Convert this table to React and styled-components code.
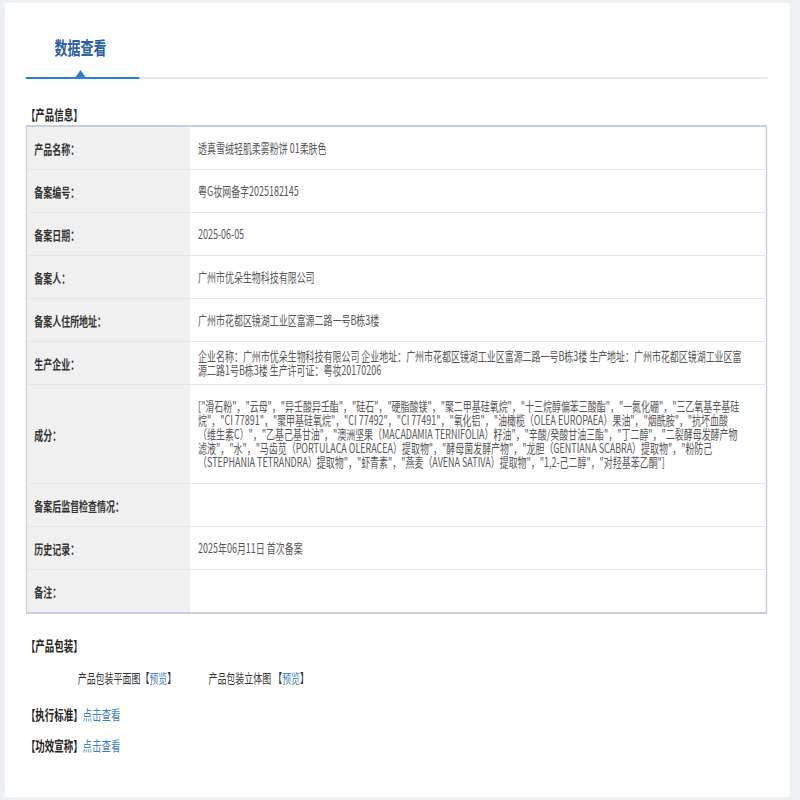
import styled, { createGlobalStyle } from "styled-components";

// the reference is squeezed horizontally, so the page is laid out wide and scaled
const SQUEEZE = 0.7;

const GlobalStyle = createGlobalStyle`
  html, body {
    margin: 0;
    padding: 0;
    overflow: hidden;
    background: #edf1f5;
  }
  body {
    font-family: "Noto Sans CJK SC", "Microsoft YaHei", sans-serif;
    color: #555;
  }
`;

const Stage = styled.div`
  width: ${800 / SQUEEZE}px;
  height: 800px;
  transform: scaleX(${SQUEEZE});
  transform-origin: 0 0;
`;

const Card = styled.div`
  box-sizing: border-box;
  margin: 3px 0 0 7px;
  width: 1121px;
  height: 794px;
  background: #fff;
  padding: 0 32px 0 30px;
`;

const TabBar = styled.div`
  display: flex;
  border-bottom: 2px solid #e3e6ea;
`;

const Tab = styled.div`
  position: relative;
  box-sizing: border-box;
  width: 162px;
  padding: 32px 6px 18px 0;
  margin-bottom: -2px;
  text-align: center;
  font-size: 18.5px;
  line-height: 24px;
  font-weight: 700;
  color: #2b5fa8;
  border-bottom: 2px solid #2a7fd2;

  &::after {
    content: "";
    position: absolute;
    left: 50%;
    bottom: 0;
    margin-left: -10px;
    border-left: 7px solid transparent;
    border-right: 7px solid transparent;
    border-bottom: 7px solid #2a7fd2;
  }
`;

const SectionTitle = styled.div`
  margin-top: ${(p) => p.$top}px;
  font-size: 13.5px;
  line-height: 18px;
  font-weight: 700;
  color: #222;
  display: flex;
  align-items: center;
`;

const Link = styled.a`
  color: #3c7fc6;
  font-weight: 400;
  font-size: ${(p) => (p.$big ? 13.5 : 12.8)}px;
  text-decoration: none;
  cursor: pointer;
`;

const Table = styled.div`
  margin-top: 2px;
  border: 2px solid #c4cedf;
`;

const Row = styled.div`
  display: grid;
  grid-template-columns: 233px 1fr;
  border-bottom: 1px solid #e5e5e5;

  &:last-child {
    border-bottom: none;
  }
`;

const Label = styled.div`
  display: flex;
  align-items: center;
  min-height: 42px;
  padding-left: 10px;
  background: #f0f0f0;
  font-size: 12.8px;
  font-weight: 700;
  color: #333;
`;

const Value = styled.div`
  display: flex;
  align-items: center;
  min-height: 42px;
  box-sizing: border-box;
  padding: ${(p) => (p.$tall ? 14 : 7)}px 33px ${(p) => (p.$tall ? 14 : 7)}px 11px;
  font-size: 12.8px;
  line-height: 14px;
  color: #555;
`;

const PackRow = styled.div`
  display: flex;
  gap: 46px;
  margin-top: 15px;
  padding-left: 74px;
  font-size: 12.8px;
  line-height: 18px;
  color: #333;
`;

const PackItem = styled.span``;

const rows = [
  ["产品名称：", "透真雪绒轻肌柔雾粉饼 01柔肤色"],
  ["备案编号：", "粤G妆网备字2025182145"],
  ["备案日期：", "2025-06-05"],
  ["备案人：", "广州市优朵生物科技有限公司"],
  ["备案人住所地址：", "广州市花都区镜湖工业区富源二路一号B栋3楼"],
  [
    "生产企业：",
    "企业名称：广州市优朵生物科技有限公司 企业地址：广州市花都区镜湖工业区富源二路一号B栋3楼 生产地址：广州市花都区镜湖工业区富源二路1号B栋3楼 生产许可证：粤妆20170206",
  ],
  [
    "成分：",
    '["滑石粉"，"云母"，"异壬酸异壬酯"，"硅石"，"硬脂酸镁"，"聚二甲基硅氧烷"，"十三烷醇偏苯三酸酯"，"一氮化硼"，"三乙氧基辛基硅烷"，"CI 77891"，"聚甲基硅氧烷"，"CI 77492"，"CI 77491"，"氧化铝"，"油橄榄（OLEA EUROPAEA）果油"，"烟酰胺"，"抗坏血酸（维生素C）"，"乙基己基甘油"，"澳洲坚果（MACADAMIA TERNIFOLIA）籽油"，"辛酸/癸酸甘油三酯"，"丁二醇"，"二裂酵母发酵产物滤液"，"水"，"马齿苋（PORTULACA OLERACEA）提取物"，"酵母菌发酵产物"，"龙胆（GENTIANA SCABRA）提取物"，"粉防己（STEPHANIA TETRANDRA）提取物"，"虾青素"，"燕麦（AVENA SATIVA）提取物"，"1,2-己二醇"，"对羟基苯乙酮"]',
    true,
  ],
  ["备案后监督检查情况：", ""],
  ["历史记录：", "2025年06月11日 首次备案"],
  ["备注：", ""],
];

export default function App() {
  return (
    <>
      <GlobalStyle />
      <Stage>
        <Card>
          <TabBar>
            <Tab>数据查看</Tab>
          </TabBar>

          <SectionTitle $top={26}>【产品信息】</SectionTitle>
          <Table>
            {rows.map(([label, value, tall]) => (
              <Row key={label}>
                <Label>{label}</Label>
                <Value $tall={tall}>{value}</Value>
              </Row>
            ))}
          </Table>

          <SectionTitle $top={22}>【产品包装】</SectionTitle>
          <PackRow>
            <PackItem>
              产品包装平面图【<Link>预览</Link>】
            </PackItem>
            <PackItem>
              产品包装立体图 【<Link>预览</Link>】
            </PackItem>
          </PackRow>

          <SectionTitle $top={18}>
            【执行标准】<Link $big>点击查看</Link>
          </SectionTitle>
          <SectionTitle $top={13}>
            【功效宣称】<Link $big>点击查看</Link>
          </SectionTitle>
        </Card>
      </Stage>
    </>
  );
}
